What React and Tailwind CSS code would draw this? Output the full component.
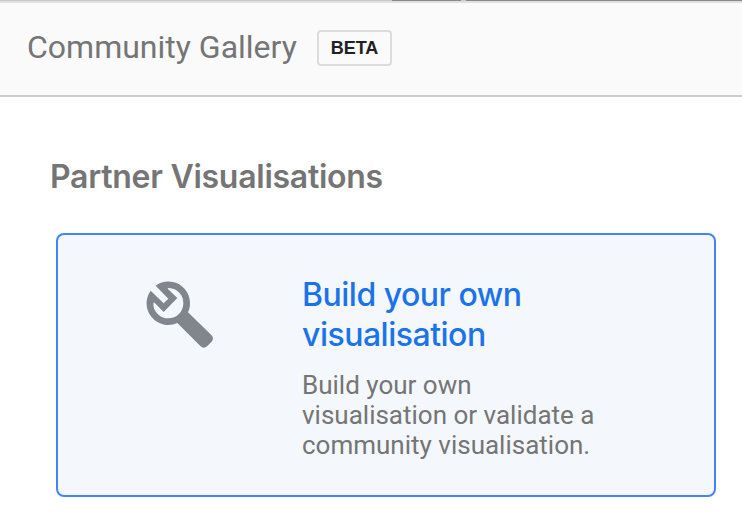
function WrenchIcon() {
  return (
    <svg className="h-[100px] w-[100px] shrink-0" viewBox="0 0 300 300" fill="#80868b" aria-hidden="true">
      <path
        fillRule="evenodd"
        d="M77 62 A65 65 0 0 1 174 142 L244 210 Q254 220 244 231 L232 243 Q221 253 211 243 L142 174 A65 65 0 0 1 62 77 L101 115 L115 101 Z M113 71 L142 99 L101 141 L72 112 Q70 115 70 119 A45 45 0 0 0 115 160 A45 45 0 0 0 160 115 A45 45 0 0 0 117 69 Q113 69 113 71 Z"
      />
    </svg>
  );
}

export default function App() {
  return (
    <div className="h-[524px] w-[742px] overflow-hidden bg-white font-['Roboto',sans-serif] text-[#757575]">
      <div className="flex h-px">
        <div className="w-[392px] bg-[#c8c8c9]" />
        <div className="w-[69px] bg-[#8b888d]" />
        <div className="w-[5px] bg-[#c8c8c9]" />
        <div className="flex-1 bg-[#8b888d]" />
      </div>
      <header className="flex h-24 items-center border-t-2 border-b-2 border-t-[#e0e0e0] border-b-[#cbcbcd] bg-[#fafafa] pb-[2px] pl-[27px]">
        <h1 className="w-[290px] pb-[2px] text-[32px] leading-10 whitespace-nowrap">Community Gallery</h1>
        <span className="flex h-9 w-[75px] items-center justify-center rounded-[4px] border-2 border-[#dadce0] font-['Liberation_Sans',sans-serif] text-[18px] font-bold text-[#202124]">
          BETA
        </span>
      </header>
      <main className="pt-[60px]">
        <h2 className="ml-[50px] font-['Inter',sans-serif] text-[32px] leading-10 font-semibold tracking-[-0.27px] whitespace-nowrap">
          Partner Visualisations
        </h2>
        <section className="mt-[36px] ml-14 flex h-[264px] w-[660px] rounded-lg border-2 border-[#4285f4] bg-[#f4f8fd] pt-[30px] pl-[72px]">
          <WrenchIcon />
          <div className="ml-[72px] pt-[10px]">
            <h3 className="font-['Inter',sans-serif] text-[32px] leading-10 font-medium tracking-[-0.5px] whitespace-nowrap text-[#1a73e8]">
              Build your own
              <br />
              visualisation
            </h3>
            <p className="mt-[15px] text-[26px] leading-[30px] whitespace-nowrap">
              Build your own
              <br />
              visualisation or validate a
              <br />
              community visualisation.
            </p>
          </div>
        </section>
      </main>
    </div>
  );
}
